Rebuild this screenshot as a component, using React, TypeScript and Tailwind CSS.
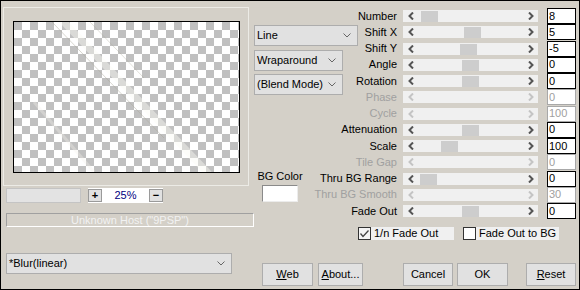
import React from 'react';

const rows = [
  { label: 'Number', value: '8', thumb: 18 },
  { label: 'Shift X', value: '5', thumb: 61 },
  { label: 'Shift Y', value: '-5', thumb: 57 },
  { label: 'Angle', value: '0', thumb: 59 },
  { label: 'Rotation', value: '0', thumb: 59 },
  { label: 'Phase', value: '0', disabled: true },
  { label: 'Cycle', value: '100', disabled: true },
  { label: 'Attenuation', value: '0', thumb: 59 },
  { label: 'Scale', value: '100', thumb: 38 },
  { label: 'Tile Gap', value: '0', disabled: true },
  { label: 'Thru BG Range', value: '0', thumb: 17 },
  { label: 'Thru BG Smooth', value: '30', disabled: true },
  { label: 'Fade Out', value: '0', thumb: 59 },
];

const Arrow = ({ dir, off }: { dir: 'l' | 'r'; off?: boolean }) => (
  <svg width="6" height="8" viewBox="0 0 6 8">
    <polyline
      points={dir === 'l' ? '5,0.5 1.5,4 5,7.5' : '1,0.5 4.5,4 1,7.5'}
      fill="none"
      stroke={off ? '#c4c4c4' : '#555'}
      strokeWidth={2}
    />
  </svg>
);

const Chevron = () => (
  <svg width="8" height="5" viewBox="0 0 8 5">
    <polyline points="0.5,0.5 4,4 7.5,0.5" fill="none" stroke="#666" strokeWidth={1} />
  </svg>
);

const Select = ({ label, className }: { label: string; className: string }) => (
  <div className={`flex items-center justify-between bg-[#e1e1e1] border border-[#adadad] pl-[2px] pr-[6px] ${className}`}>
    <span>{label}</span>
    <Chevron />
  </div>
);

const Button = ({ children, className }: { children: React.ReactNode; className: string }) => (
  <button className={`h-[23px] bg-[#e1e1e1] border border-[#adadad] flex items-center justify-center ${className}`}>
    {children}
  </button>
);

export default function App() {
  return (
    <div className="w-[580px] h-[290px] border border-black bg-[#d4d0c8] flex overflow-hidden font-['Liberation_Sans',Arial,sans-serif] text-[11px] leading-[13px] text-black">
      {/* left: preview */}
      <div className="w-[253px] shrink-0 flex flex-col">
        <div className="ml-[2px] mt-[6px] w-[246px] h-[179px] border border-[#ecebe6]">
          <div className="relative ml-[9px] mt-[13px] w-[227px] h-[152px] border border-black bg-[conic-gradient(#fff_25%,#c0c0c0_0_50%,#fff_0_75%,#c0c0c0_0)] bg-[length:16px_16px] overflow-hidden">
            <svg className="absolute inset-0" width="225" height="150" viewBox="0 0 225 150">
              <line x1="48" y1="-2" x2="195" y2="152" stroke="#fbfaf5" strokeOpacity="0.45" strokeWidth="7" />
              <line x1="38" y1="0" x2="150" y2="116" stroke="#a8a696" strokeOpacity="0.45" strokeWidth="1" />
              <line x1="76" y1="0" x2="130" y2="56" stroke="#a8a696" strokeOpacity="0.35" strokeWidth="1" />
              <line x1="20" y1="80" x2="80" y2="150" stroke="#f4f2ea" strokeOpacity="0.35" strokeWidth="3" />
            </svg>
          </div>
        </div>
        <div className="mt-[2px] flex items-center">
          <div className="ml-[5px] w-[75px] h-[15px] bg-[#e3e3e3] border border-[#c4c4c4]" />
          <div className="ml-[7px] w-[75px] h-[15px] bg-white flex items-center justify-between">
            <div className="w-[14px] h-[13px] bg-[#e1e1e1] border border-[#9a9a9a] flex items-center justify-center font-bold leading-none">+</div>
            <span className="text-[#000080]">25%</span>
            <div className="w-[14px] h-[13px] bg-[#e1e1e1] border border-[#9a9a9a] flex items-center justify-center font-bold leading-none">−</div>
          </div>
        </div>
        <div className="mt-[10px] ml-[5px] w-[248px] h-[14px] border-t border-l border-[#a0a0a0] border-b-white border-r-white border-b border-r flex items-center justify-center text-[#f2f2f2]">
          Unknown Host ("9PSP")
        </div>
        <Select label="*Blur(linear)" className="mt-[26px] ml-[5px] w-[226px] h-[21px]" />
      </div>

      {/* right: controls */}
      <div className="flex-1 flex flex-col">
        <div className="h-[218px] flex">
          <div className="w-[104px] shrink-0 flex flex-col pt-[24px]">
            <Select label="Line" className="w-[104px] h-[21px]" />
            <Select label="Wraparound" className="mt-[4px] w-[89px] h-[21px]" />
            <Select label="(Blend Mode)" className="mt-[3px] w-[89px] h-[21px]" />
            <div className="mt-[75px] ml-[8px] w-[36px] flex flex-col items-center">
              <span className="whitespace-nowrap">BG Color</span>
              <div className="mt-[2px] w-[36px] h-[17px] bg-white border border-t-[#8a8a8a] border-l-[#8a8a8a] border-b-[#ececec] border-r-[#ececec]" />
            </div>
          </div>
          <div className="flex-1 pt-[7px]">
            {rows.map((r) => (
              <div key={r.label} className="h-[16.25px] flex items-center">
                <div className={`w-[39px] flex justify-end whitespace-nowrap ${r.disabled ? 'text-[#a0a0a0]' : ''}`}>{r.label}</div>
                <div className="relative ml-[6px] w-[135px] h-[12px] bg-[#f0f0f0] flex items-center justify-between pl-[5px] pr-[4px]">
                  <Arrow dir="l" off={r.disabled} />
                  {r.thumb !== undefined && (
                    <div className="absolute top-[1px] w-[17px] h-[11px] bg-[#cdcdcd]" style={{ left: r.thumb }} />
                  )}
                  <Arrow dir="r" off={r.disabled} />
                </div>
                <div className={`ml-[9px] w-[29px] h-[16px] bg-white border pl-[1px] flex items-center ${r.disabled ? 'border-[#a8a8a8] text-[#a0a0a0]' : 'border-black'}`}>
                  {r.value}
                </div>
              </div>
            ))}
          </div>
        </div>

        <div className="mt-[8px] pl-[104px] flex items-center">
          <div className="w-[13px] h-[13px] bg-[#f4f4f4] border border-[#333] flex items-center justify-center">
            <svg width="9" height="8" viewBox="0 0 9 8">
              <polyline points="0.5,3.5 3,6.5 8.5,0.5" fill="none" stroke="#444" strokeWidth={1.3} />
            </svg>
          </div>
          <div className="w-[83px] h-[13px] bg-[#f0f0f0] pl-[3px] flex items-center">1/n Fade Out</div>
          <div className="ml-[9px] w-[13px] h-[13px] bg-white border border-[#333]" />
          <div className="w-[83px] h-[13px] bg-[#f0f0f0] pl-[3px] flex items-center">Fade Out to BG</div>
        </div>

        <div className="mt-[23px] flex">
          <Button className="ml-[8px] w-[51px]"><span className="underline">W</span>eb</Button>
          <Button className="ml-[5px] w-[45px]"><span className="underline">A</span>bout...</Button>
          <Button className="ml-[40px] w-[50px]">Cancel</Button>
          <Button className="ml-[4px] w-[51px]">OK</Button>
          <Button className="ml-[18px] w-[50px]"><span className="underline">R</span>eset</Button>
        </div>
      </div>
    </div>
  );
}
